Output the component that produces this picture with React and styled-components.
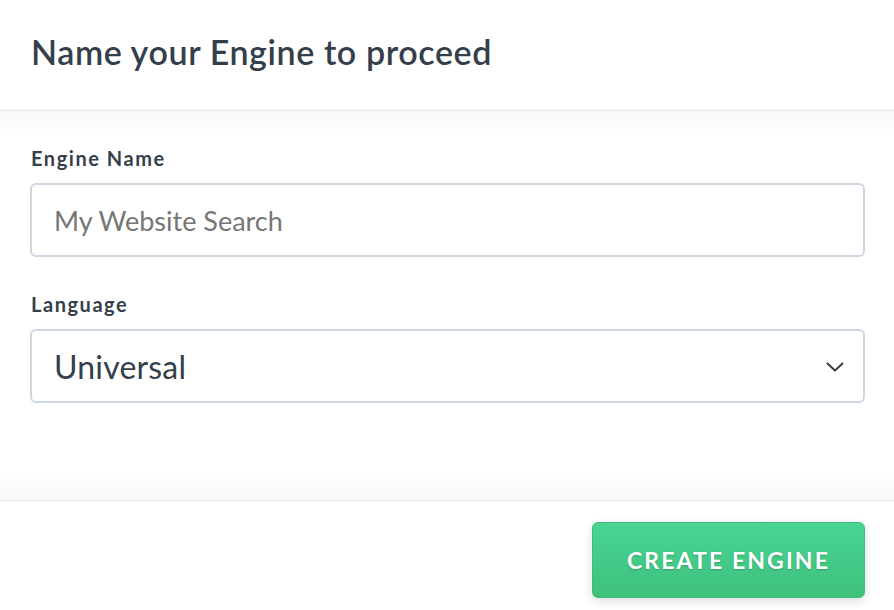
import React from "react";
import styled, { createGlobalStyle } from "styled-components";

const Global = createGlobalStyle`
  html, body { margin: 0; padding: 0; background: #ffffff; }
  body { font-family: Lato, "Open Sans", sans-serif; -webkit-font-smoothing: antialiased; }
  * { box-sizing: border-box; }
`;

const Modal = styled.div`
  width: 894px;
  height: 610px;
  display: flex;
  flex-direction: column;
  background: #fff;
  overflow: hidden;
`;

const Header = styled.header`
  height: 111px;
  flex: none;
  display: flex;
  align-items: center;
  padding: 0 31px 8px;
  border-bottom: 1px solid #e4e8ee;
`;

const Title = styled.h1`
  margin: 0;
  font-size: 34px;
  font-weight: 600;
  color: #353f4b;
  letter-spacing: 0.6px;
`;

const Body = styled.main`
  flex: 1;
  padding: 35px 29px 0 30px;
  display: flex;
  flex-direction: column;
  background: linear-gradient(to bottom, #f6f7f9 0px, #ffffff 22px, #ffffff calc(100% - 30px), #f8f8f9 100%);
  border-bottom: 1px solid #e4e8ee;
`;

const Field = styled.div`
  flex: none;
  display: flex;
  flex-direction: column;
  margin-bottom: ${(p) => p.$gap || 0}px;
`;

const Label = styled.label`
  font-size: 20px;
  font-weight: 700;
  color: #353f4b;
  line-height: 24px;
  margin-bottom: 13px;
  padding-left: 1px;
  letter-spacing: 1.55px;
`;

const Input = styled.input`
  flex: none;
  height: 74px;
  width: 100%;
  border: 2px solid #cdd6e1;
  border-radius: 6px;
  padding: 0 22px;
  font-family: Lato, "Open Sans", sans-serif;
  font-size: 27px;
  color: #353f4b;
  outline: none;
  background: #fff;
  &::placeholder { color: #767676; }
`;

const SelectBox = styled.div`
  flex: none;
  height: 74px;
  width: 100%;
  border: 2px solid #cdd6e1;
  border-radius: 6px;
  padding: 0 22px;
  display: flex;
  align-items: center;
  justify-content: space-between;
  background: #fff;
`;

const SelectValue = styled.span`
  font-size: 32px;
  color: #353f4b;
  letter-spacing: 0.2px;
`;

const Chevron = styled.svg`
  width: 18px;
  height: 10px;
  margin-right: -3px;
  margin-top: 2px;
`;

const Footer = styled.footer`
  height: 109px;
  flex: none;
  display: flex;
  justify-content: flex-end;
  align-items: flex-start;
  padding: 21px 29px 0 0;
`;

const Button = styled.button`
  width: 273px;
  height: 76px;
  border: 1px solid #3cbd78;
  border-radius: 6px;
  background: linear-gradient(to bottom, #48d495, #3fc17c);
  box-shadow: 0 3px 10px rgba(0, 0, 0, 0.14);
  color: #fff;
  font-family: Lato, "Open Sans", sans-serif;
  font-weight: 700;
  font-size: 23px;
  letter-spacing: 2.1px;
  text-shadow: 0 1px 2px rgba(0, 0, 0, 0.2);
  cursor: pointer;
  padding: 0;
`;

export default function App() {
  return (
    <>
      <Global />
      <Modal>
        <Header>
          <Title>Name your Engine to proceed</Title>
        </Header>
        <Body>
          <Field $gap={35}>
            <Label>Engine Name</Label>
            <Input placeholder="My Website Search" />
          </Field>
          <Field>
            <Label>Language</Label>
            <SelectBox>
              <SelectValue>Universal</SelectValue>
              <Chevron viewBox="0 0 18 10" fill="none">
                <path d="M1.5 1.5 L9 8.5 L16.5 1.5" stroke="#353f4b" strokeWidth="2" strokeLinecap="round" strokeLinejoin="round" />
              </Chevron>
            </SelectBox>
          </Field>
        </Body>
        <Footer>
          <Button>CREATE ENGINE</Button>
        </Footer>
      </Modal>
    </>
  );
}
